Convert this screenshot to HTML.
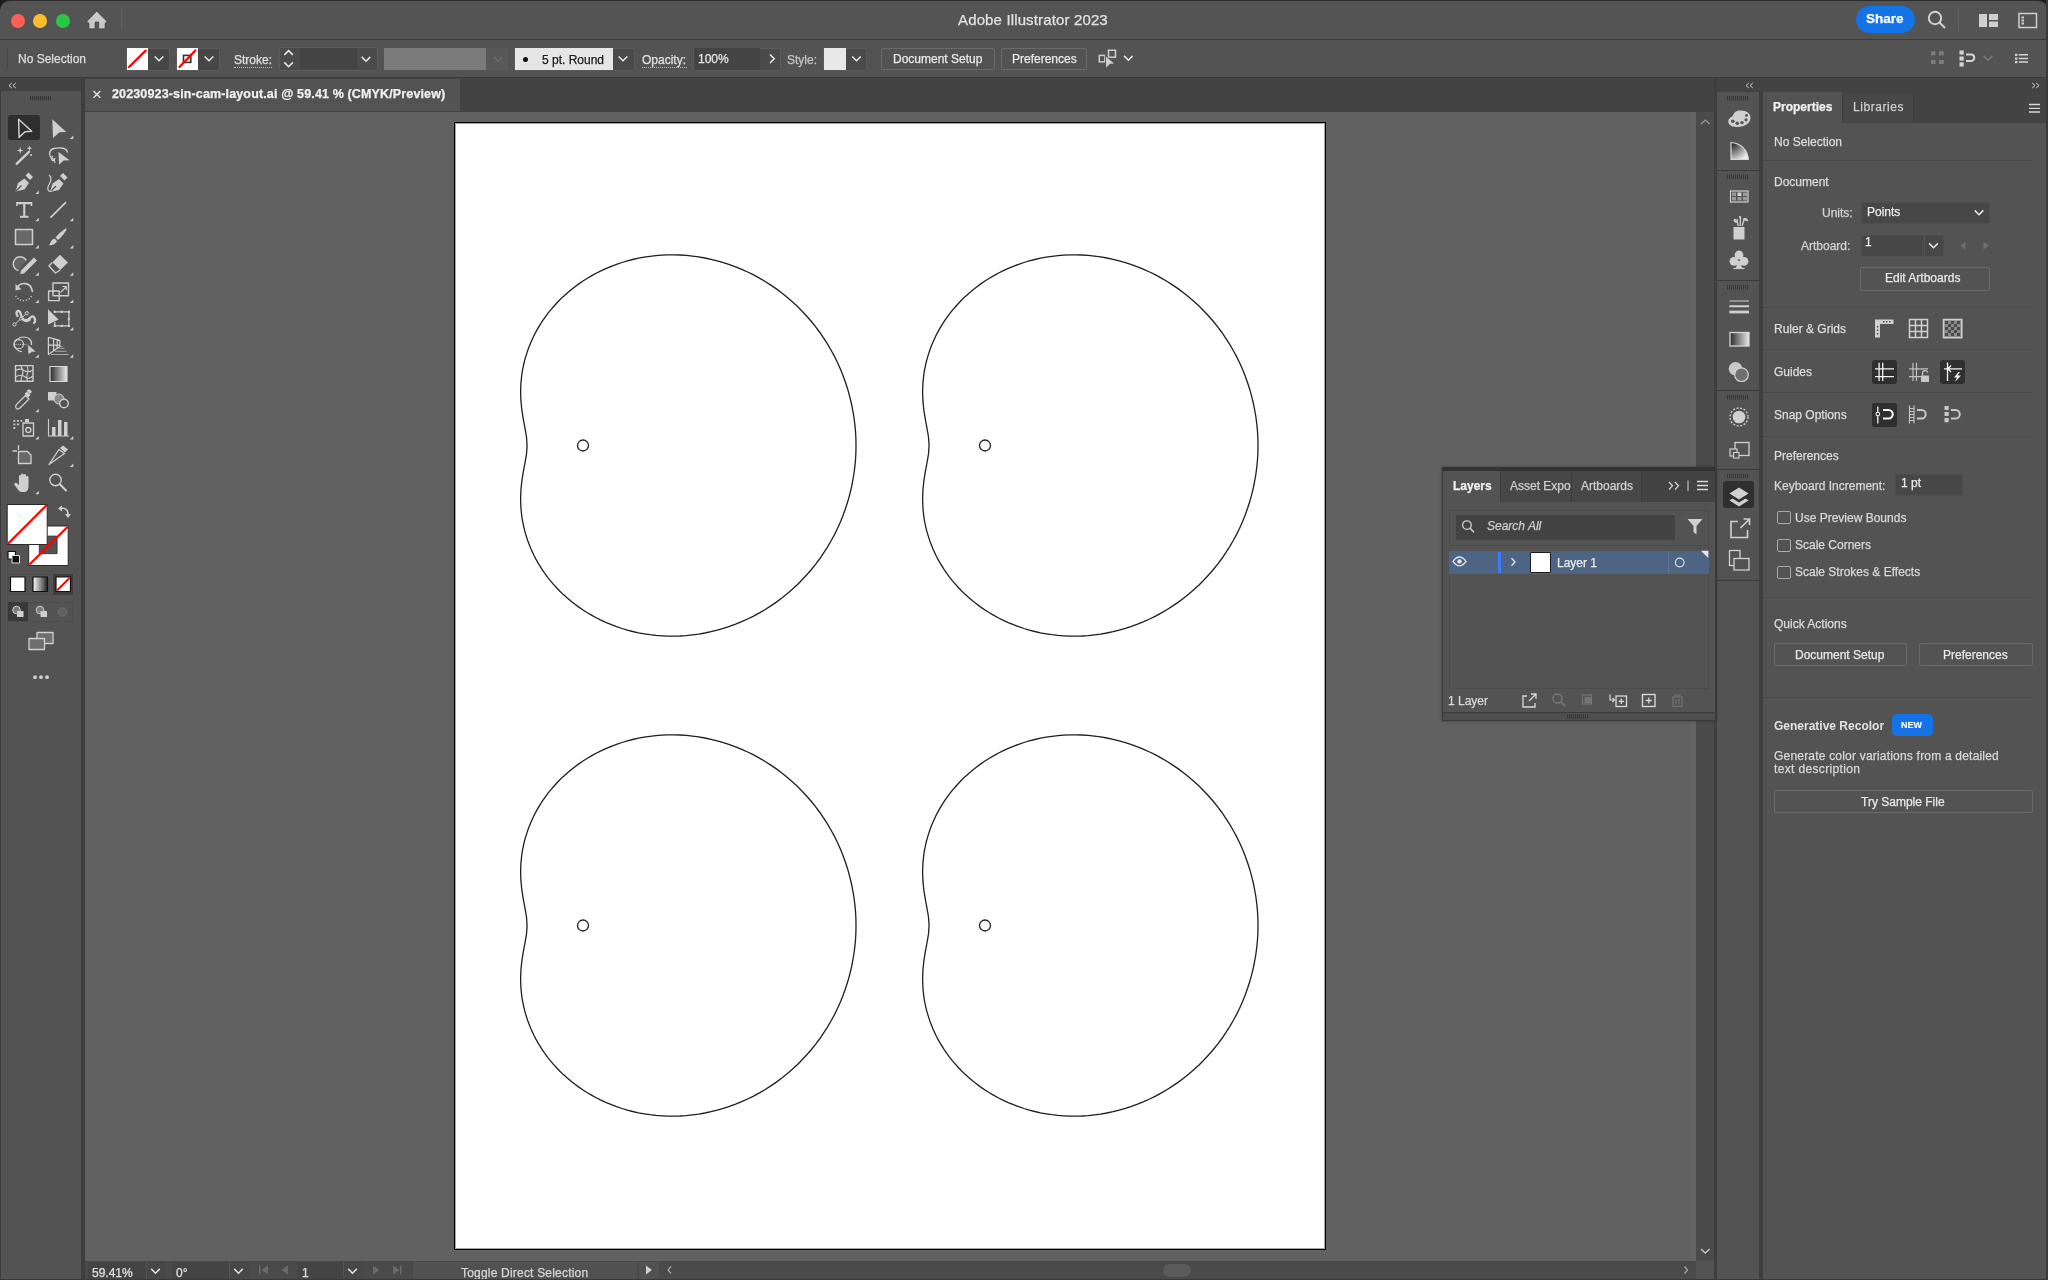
<!DOCTYPE html>
<html><head><meta charset="utf-8">
<style>
*{margin:0;padding:0;box-sizing:border-box}
html,body{width:2048px;height:1280px;overflow:hidden;background:#535353}
html{background:#1c1c1c}
body{position:relative;font-family:"Liberation Sans",sans-serif}
.a{position:absolute}
.t{position:absolute;white-space:nowrap;line-height:1;font-size:12px;color:#dcdcdc;-webkit-text-stroke-width:0.25px;will-change:transform}
.b{font-weight:bold}
svg{position:absolute;overflow:visible}
</style></head><body>
<!-- title bar -->
<div class="a" style="left:0;top:0;width:12px;height:12px;background:#1c1c1c"></div><div class="a" style="left:2036px;top:0;width:12px;height:12px;background:#1c1c1c"></div>
<div class="a" style="left:0;top:0;width:2048px;height:40px;background:#545454;border-top:1px solid #2c2c2c;border-radius:10px 10px 0 0"></div>
<div class="a" style="left:0;top:39px;width:2048px;height:1px;background:#3b3b3b"></div>
<div class="a" style="left:10.5px;top:13.8px;width:14px;height:14px;border-radius:50%;background:#fe5f57"></div>
<div class="a" style="left:33.3px;top:13.8px;width:14px;height:14px;border-radius:50%;background:#febc2e"></div>
<div class="a" style="left:56px;top:13.8px;width:14px;height:14px;border-radius:50%;background:#28c840"></div>
<div class="a" style="left:121px;top:8px;width:1px;height:22px;background:#5f5f5f"></div>
<div class="t" style="left:958px;top:11.8px;font-size:15px;letter-spacing:0.14px;color:#e2e2e2">Adobe Illustrator 2023</div>
<div class="a" style="left:1856px;top:6px;width:59px;height:27px;border-radius:14px;background:#1473e6"></div>
<div class="t b" style="left:1866px;top:11.7px;font-size:13.5px;color:#fff">Share</div>
<div class="a" style="left:1958px;top:8px;width:1px;height:23px;background:#5f5f5f"></div>
<!-- control bar -->
<div class="a" style="left:0;top:40px;width:2048px;height:38px;background:#535353"></div>
<div class="a" style="left:0;top:77px;width:2048px;height:1px;background:#3c3c3c"></div>
<div class="t" style="left:17.6px;top:52.7px;color:#dedede">No Selection</div>
<div class="a" style="left:125.5px;top:47.5px;width:44px;height:23px;border:1px solid #5b5b5b;border-radius:2px;background:#474747"></div>
<div class="a" style="left:126.6px;top:48px;width:21.5px;height:21.7px;background:#fff"></div>
<div class="a" style="left:175.5px;top:47.5px;width:44px;height:23px;border:1px solid #5b5b5b;border-radius:2px;background:#474747"></div>
<div class="a" style="left:176.5px;top:48px;width:21.8px;height:21.7px;background:#fff"></div>
<div class="t" style="left:233.5px;top:53.6px;color:#e0e0e0">Stroke:</div>
<div class="a" style="left:278.8px;top:47.3px;width:99px;height:23.4px;border:1px solid #5c5c5c;border-radius:2px;background:#4b4b4b"></div>
<div class="a" style="left:299.5px;top:48px;width:57px;height:21.2px;background:#444"></div>
<div class="a" style="left:384px;top:47.5px;width:102px;height:22.5px;background:#7b7b7b"></div>
<div class="a" style="left:486px;top:47.5px;width:22px;height:22.5px;background:#585858"></div>
<div class="a" style="left:513.5px;top:47.5px;width:121px;height:23px;border:1px solid #5b5b5b;border-radius:2px;background:#4a4a4a"></div>
<div class="a" style="left:514.5px;top:48px;width:98px;height:21.7px;background:#e6e6e6"></div>
<div class="a" style="left:522.5px;top:56.5px;width:5px;height:5px;border-radius:50%;background:#111"></div>
<div class="t" style="left:542px;top:53.6px;color:#1a1a1a">5 pt. Round</div>
<div class="t" style="left:642px;top:53.6px;color:#e0e0e0">Opacity:</div>
<div class="a" style="left:693px;top:47.5px;width:88px;height:23px;border:1px solid #5b5b5b;border-radius:2px;background:#4b4b4b"></div>
<div class="a" style="left:694px;top:48px;width:66.3px;height:21.7px;background:#444"></div>
<div class="t" style="left:698px;top:53px;color:#e6e6e6">100%</div>
<div class="a" style="left:233.5px;top:66.5px;width:38px;height:1px;border-top:1px dotted #bdbdbd"></div>
<div class="a" style="left:642px;top:66.5px;width:45px;height:1px;border-top:1px dotted #bdbdbd"></div>

<div class="t" style="left:787px;top:53.6px;color:#c4c4c4">Style:</div>
<div class="a" style="left:823px;top:47.5px;width:44px;height:23px;border:1px solid #5b5b5b;border-radius:2px;background:#4a4a4a"></div>
<div class="a" style="left:823.8px;top:48px;width:22.2px;height:21.7px;background:#e8e8e8"></div>
<div class="a" style="left:881px;top:48px;width:113.5px;height:21.5px;border:1px solid #6a6a6a;border-radius:2px"></div>
<div class="t" style="left:892.6px;top:53.3px;color:#e8e8e8">Document Setup</div>
<div class="a" style="left:1000.5px;top:48px;width:86px;height:21.5px;border:1px solid #6a6a6a;border-radius:2px"></div>
<div class="t" style="left:1012px;top:53.3px;color:#e8e8e8">Preferences</div>
<!-- left tool panel -->
<div class="a" style="left:0;top:78px;width:81px;height:1202px;background:#535353;border-left:1px solid #3c3c3c"></div>
<div class="a" style="left:0;top:78px;width:81px;height:13px;background:#434343"></div>
<div class="a" style="left:81px;top:78px;width:4px;height:1202px;background:#3f3f3f"></div>
<div class="a" style="left:8.2px;top:115px;width:31.8px;height:25px;background:#2e2e2e;border-radius:3px"></div>
<div class="a" style="left:7.6px;top:574px;width:65px;height:21px;border:1px solid #4d4d4d"></div>
<div class="a" style="left:52.5px;top:574px;width:20px;height:21px;background:#3d3d3d"></div>
<div class="a" style="left:7.6px;top:602px;width:65px;height:20px;border:1px solid #4d4d4d"></div>
<div class="a" style="left:8px;top:602.4px;width:20px;height:19px;background:#393939"></div>
<!-- tab bar -->
<div class="a" style="left:85px;top:78px;width:1629px;height:34px;background:#434343"></div>
<div class="a" style="left:85px;top:79px;width:375px;height:32px;background:#535353"></div>
<div class="t b" style="left:112px;top:87.7px;font-size:12.5px;letter-spacing:0.14px;color:#f0f0f0">20230923-sin-cam-layout.ai @ 59.41 % (CMYK/Preview)</div>
<!-- canvas -->
<div class="a" style="left:85px;top:112px;width:1611px;height:1149px;background:#616161"></div>
<div class="a" style="left:454px;top:122px;width:872px;height:1128px;background:#fff;border:1px solid #000;box-shadow:inset 0 0 0 1px rgba(0,0,0,.35)"></div>
<svg width="2048" height="1280" style="left:0;top:0">
<defs><path id="cam" d="M273.0 -0.0 L272.9 -7.1 L272.5 -14.3 L271.8 -21.4 L270.9 -28.5 L269.7 -35.5 L268.3 -42.5 L266.6 -49.4 L264.7 -56.3 L262.5 -63.0 L260.1 -69.7 L257.5 -76.3 L254.6 -82.7 L251.5 -89.1 L248.1 -95.3 L244.6 -101.3 L240.8 -107.2 L236.9 -113.0 L232.7 -118.6 L228.4 -124.0 L223.8 -129.2 L219.1 -134.3 L214.3 -139.2 L209.3 -143.8 L204.1 -148.3 L198.8 -152.5 L193.4 -156.6 L187.8 -160.4 L182.2 -164.0 L176.4 -167.4 L170.6 -170.6 L164.6 -173.5 L158.7 -176.2 L152.6 -178.7 L146.5 -180.9 L140.4 -182.9 L134.2 -184.7 L128.0 -186.2 L121.8 -187.5 L115.6 -188.6 L109.4 -189.4 L103.2 -190.1 L97.0 -190.5 L90.9 -190.6 L84.9 -190.6 L78.8 -190.3 L72.9 -189.9 L67.0 -189.2 L61.2 -188.3 L55.5 -187.3 L49.8 -186.0 L44.3 -184.6 L38.9 -183.0 L33.6 -181.2 L28.4 -179.2 L23.3 -177.1 L18.4 -174.9 L13.6 -172.5 L8.9 -169.9 L4.4 -167.3 L0.0 -164.5 L-4.2 -161.6 L-8.3 -158.6 L-12.2 -155.5 L-16.0 -152.3 L-19.6 -149.1 L-23.1 -145.7 L-26.4 -142.3 L-29.5 -138.8 L-32.5 -135.3 L-35.3 -131.8 L-38.0 -128.2 L-40.5 -124.6 L-42.8 -120.9 L-45.0 -117.3 L-47.1 -113.6 L-49.0 -110.0 L-50.7 -106.3 L-52.3 -102.7 L-53.8 -99.1 L-55.1 -95.5 L-56.3 -91.9 L-57.4 -88.4 L-58.4 -84.9 L-59.2 -81.5 L-59.9 -78.1 L-60.6 -74.8 L-61.1 -71.5 L-61.5 -68.3 L-61.8 -65.1 L-62.1 -62.1 L-62.2 -59.1 L-62.3 -56.1 L-62.4 -53.3 L-62.3 -50.5 L-62.2 -47.7 L-62.1 -45.1 L-61.9 -42.5 L-61.6 -40.0 L-61.4 -37.6 L-61.1 -35.3 L-60.8 -33.0 L-60.4 -30.8 L-60.1 -28.7 L-59.7 -26.6 L-59.4 -24.6 L-59.0 -22.7 L-58.7 -20.8 L-58.3 -18.9 L-58.0 -17.2 L-57.7 -15.5 L-57.4 -13.8 L-57.1 -12.1 L-56.8 -10.5 L-56.6 -9.0 L-56.4 -7.4 L-56.3 -5.9 L-56.2 -4.4 L-56.1 -2.9 L-56.0 -1.5 L-56.0 -0.0 L-56.0 1.5 L-56.1 2.9 L-56.2 4.4 L-56.3 5.9 L-56.4 7.4 L-56.6 9.0 L-56.8 10.5 L-57.1 12.1 L-57.4 13.8 L-57.7 15.5 L-58.0 17.2 L-58.3 18.9 L-58.7 20.8 L-59.0 22.7 L-59.4 24.6 L-59.7 26.6 L-60.1 28.7 L-60.4 30.8 L-60.8 33.0 L-61.1 35.3 L-61.4 37.6 L-61.6 40.0 L-61.9 42.5 L-62.1 45.1 L-62.2 47.7 L-62.3 50.5 L-62.4 53.3 L-62.3 56.1 L-62.2 59.1 L-62.1 62.1 L-61.8 65.1 L-61.5 68.3 L-61.1 71.5 L-60.6 74.8 L-59.9 78.1 L-59.2 81.5 L-58.4 84.9 L-57.4 88.4 L-56.3 91.9 L-55.1 95.5 L-53.8 99.1 L-52.3 102.7 L-50.7 106.3 L-49.0 110.0 L-47.1 113.6 L-45.0 117.3 L-42.8 120.9 L-40.5 124.6 L-38.0 128.2 L-35.3 131.8 L-32.5 135.3 L-29.5 138.8 L-26.4 142.3 L-23.1 145.7 L-19.6 149.1 L-16.0 152.3 L-12.2 155.5 L-8.3 158.6 L-4.2 161.6 L-0.0 164.5 L4.4 167.3 L8.9 169.9 L13.6 172.5 L18.4 174.9 L23.3 177.1 L28.4 179.2 L33.6 181.2 L38.9 183.0 L44.3 184.6 L49.8 186.0 L55.5 187.3 L61.2 188.3 L67.0 189.2 L72.9 189.9 L78.8 190.3 L84.9 190.6 L90.9 190.6 L97.0 190.5 L103.2 190.1 L109.4 189.4 L115.6 188.6 L121.8 187.5 L128.0 186.2 L134.2 184.7 L140.4 182.9 L146.5 180.9 L152.6 178.7 L158.7 176.2 L164.6 173.5 L170.6 170.6 L176.4 167.4 L182.2 164.0 L187.8 160.4 L193.4 156.6 L198.8 152.5 L204.1 148.3 L209.3 143.8 L214.3 139.2 L219.1 134.3 L223.8 129.2 L228.4 124.0 L232.7 118.6 L236.9 113.0 L240.8 107.2 L244.6 101.3 L248.1 95.3 L251.5 89.1 L254.6 82.7 L257.5 76.3 L260.1 69.7 L262.5 63.0 L264.7 56.3 L266.6 49.4 L268.3 42.5 L269.7 35.5 L270.9 28.5 L271.8 21.4 L272.5 14.3 L272.9 7.1Z" fill="none" stroke="#1e1e1e" stroke-width="1.3"/></defs>
<use href="#cam" x="583" y="445.5"/><use href="#cam" x="985" y="445.5"/>
<use href="#cam" x="583" y="925.5"/><use href="#cam" x="985" y="925.5"/>
<g fill="none" stroke="#1e1e1e" stroke-width="1.3">
<circle cx="583" cy="445.5" r="5.5"/><circle cx="985" cy="445.5" r="5.5"/>
<circle cx="583" cy="925.5" r="5.5"/><circle cx="985" cy="925.5" r="5.5"/>
</g></svg>
<!-- vertical scrollbar -->
<div class="a" style="left:1690px;top:112px;width:6px;height:1149px;background:#636363"></div>
<div class="a" style="left:1696px;top:112px;width:18px;height:1149px;background:#4b4b4b"></div>
<!-- status bar -->
<div class="a" style="left:85px;top:1261px;width:1611px;height:19px;background:#4a4a4a"></div>

<!-- dock -->
<div class="a" style="left:1714px;top:78px;width:3px;height:1202px;background:#3f3f3f"></div>
<div class="a" style="left:1717px;top:78px;width:42px;height:1202px;background:#535353"></div>
<div class="a" style="left:1717px;top:78px;width:331px;height:14px;background:#434343"></div>
<div class="a" style="left:1759px;top:92px;width:4px;height:1188px;background:#3f3f3f"></div>
<!-- properties -->
<div class="a" style="left:1763px;top:92px;width:283px;height:1188px;background:#535353"></div>
<div class="a" style="left:1842px;top:92px;width:204px;height:30.5px;background:#434343"></div>
<div class="a" style="left:1842px;top:93px;width:72px;height:29px;background:#474747;border-left:1px solid #3c3c3c;border-right:1px solid #3c3c3c"></div>
<div class="t b" style="left:1773px;top:100.7px;color:#f0f0f0">Properties</div>
<div class="t" style="left:1852.5px;top:100.7px;letter-spacing:0.55px;color:#cfcfcf">Libraries</div>
<div class="t" style="left:1774px;top:136.2px;color:#dcdcdc">No Selection</div>
<div class="a" style="left:1763px;top:160px;width:270px;height:1px;background:#4a4a4a"></div>
<div class="t" style="left:1774px;top:175.7px;color:#dcdcdc">Document</div>
<div class="t" style="left:1822px;top:206.6px;color:#d4d4d4">Units:</div>
<div class="a" style="left:1860.5px;top:201.5px;width:129.5px;height:22.5px;background:#474747;border:1px solid #4e4e4e;border-radius:2px"></div>
<div class="t" style="left:1867px;top:206.1px;color:#eaeaea">Points</div>
<div class="t" style="left:1801px;top:239.6px;color:#d4d4d4">Artboard:</div>
<div class="a" style="left:1860.5px;top:235px;width:83.5px;height:21.5px;background:#474747;border:1px solid #4e4e4e;border-radius:2px"></div>
<div class="a" style="left:1923.5px;top:235.5px;width:1px;height:20.5px;background:#555"></div>
<div class="t" style="left:1865px;top:236.1px;color:#eaeaea">1</div>
<div class="a" style="left:1860px;top:267px;width:130px;height:23.5px;border:1px solid #6a6a6a;border-radius:2px"></div>
<div class="t" style="left:1884.5px;top:272.2px;color:#e8e8e8">Edit Artboards</div>
<div class="a" style="left:1763px;top:306.5px;width:270px;height:1px;background:#4a4a4a"></div>
<div class="t" style="left:1774px;top:322.7px;color:#dcdcdc">Ruler &amp; Grids</div>
<div class="a" style="left:1763px;top:349px;width:270px;height:1px;background:#4a4a4a"></div>
<div class="t" style="left:1774px;top:365.7px;color:#dcdcdc">Guides</div>
<div class="a" style="left:1872px;top:359.5px;width:25px;height:24px;background:#2f2f2f;border-radius:3px"></div>
<div class="a" style="left:1940px;top:359.5px;width:25px;height:24px;background:#2f2f2f;border-radius:3px"></div>
<div class="a" style="left:1763px;top:392px;width:270px;height:1px;background:#4a4a4a"></div>
<div class="t" style="left:1774px;top:408.7px;color:#dcdcdc">Snap Options</div>
<div class="a" style="left:1872px;top:402.5px;width:25px;height:24px;background:#2f2f2f;border-radius:3px"></div>
<div class="a" style="left:1763px;top:435.5px;width:270px;height:1px;background:#4a4a4a"></div>
<div class="t" style="left:1774px;top:450.0px;color:#dcdcdc">Preferences</div>
<div class="t" style="left:1774px;top:480.0px;color:#d8d8d8">Keyboard Increment:</div>
<div class="a" style="left:1895px;top:473.5px;width:67.5px;height:22px;background:#474747;border:1px solid #4e4e4e;border-radius:2px"></div>
<div class="t" style="left:1901px;top:477.0px;color:#eaeaea">1 pt</div>
<div class="a" style="left:1777px;top:511px;width:13.5px;height:13px;border:1px solid #a8a8a8;border-radius:2px"></div>
<div class="t" style="left:1794.5px;top:511.5px;color:#d8d8d8">Use Preview Bounds</div>
<div class="a" style="left:1777px;top:538.5px;width:13.5px;height:13px;border:1px solid #a8a8a8;border-radius:2px"></div>
<div class="t" style="left:1794.5px;top:539.0px;color:#d8d8d8">Scale Corners</div>
<div class="a" style="left:1777px;top:565.5px;width:13.5px;height:13px;border:1px solid #a8a8a8;border-radius:2px"></div>
<div class="t" style="left:1794.5px;top:566.0px;color:#d8d8d8">Scale Strokes &amp; Effects</div>
<div class="a" style="left:1763px;top:597px;width:270px;height:1px;background:#4a4a4a"></div>
<div class="t" style="left:1774px;top:618.0px;color:#dcdcdc">Quick Actions</div>
<div class="a" style="left:1774px;top:643px;width:133px;height:23px;border:1px solid #6a6a6a;border-radius:2px"></div>
<div class="t" style="left:1795px;top:649.0px;color:#e8e8e8">Document Setup</div>
<div class="a" style="left:1918.5px;top:643px;width:114px;height:23px;border:1px solid #6a6a6a;border-radius:2px"></div>
<div class="t" style="left:1943px;top:649.0px;color:#e8e8e8">Preferences</div>
<div class="a" style="left:1763px;top:697px;width:270px;height:1px;background:#4a4a4a"></div>
<div class="t b" style="left:1774px;top:720.0px;color:#e2e2e2;-webkit-text-stroke-width:0">Generative Recolor</div>
<div class="a" style="left:1891.5px;top:714px;width:41.5px;height:22px;background:#1473e6;border-radius:5px"></div>
<div class="t b" style="left:1901.3px;top:721.2px;font-size:9px;color:#fff;-webkit-text-stroke-width:0.1px">NEW</div>
<div class="t" style="left:1774px;top:749.5px;letter-spacing:0.2px;color:#d8d8d8">Generate color variations from a detailed</div>
<div class="t" style="left:1774px;top:763.0px;letter-spacing:0.35px;color:#d8d8d8">text description</div>
<div class="a" style="left:1774px;top:789.5px;width:258.5px;height:23.5px;border:1px solid #6a6a6a;border-radius:2px"></div>
<div class="t" style="left:1861px;top:796.0px;color:#e8e8e8">Try Sample File</div>
<div class="a" style="left:2046px;top:0;width:2px;height:1280px;background:#3a3a3a"></div>
<!-- layers panel -->
<div class="a" style="left:1441.5px;top:467px;width:274px;height:254px;background:#535353;border:1px solid #3a3a3a;box-shadow:0 0 3px rgba(0,0,0,.35)"></div>
<div class="a" style="left:1442.5px;top:468px;width:272px;height:34px;background:#434343"></div>
<div class="a" style="left:1442.5px;top:467px;width:272px;height:4px;background:#333"></div>
<div class="a" style="left:1442.5px;top:471px;width:57.5px;height:31px;background:#535353"></div>
<div class="a" style="left:1500px;top:471px;width:71px;height:30.5px;background:#474747;border-left:1px solid #3c3c3c"></div>
<div class="a" style="left:1571px;top:471px;width:71px;height:30.5px;background:#474747;border-left:1px solid #3c3c3c;border-right:1px solid #3c3c3c"></div>
<div class="t b" style="left:1453px;top:480px;color:#f0f0f0">Layers</div>
<div class="a" style="left:1500px;top:469px;width:71px;height:33px;overflow:hidden"><div class="t" style="left:10px;top:11px;color:#d0d0d0">Asset Export</div></div>
<div class="t" style="left:1581px;top:480px;color:#d0d0d0">Artboards</div>
<div class="a" style="left:1448.5px;top:509.5px;width:260px;height:36px;border:1px solid #4c4c4c;background:#535353"></div>
<div class="a" style="left:1455.5px;top:514.5px;width:219.5px;height:25px;background:#434343;border-radius:2px"></div>
<div class="t" style="left:1487px;top:520px;color:#cfcfcf;font-style:italic">Search All</div>
<div class="a" style="left:1448.5px;top:545px;width:260.5px;height:144px;border:1px solid #4c4c4c;border-top:none"></div>
<div class="a" style="left:1448.5px;top:550.5px;width:260px;height:23.5px;background:#4d6582"></div>
<div class="a" style="left:1497.5px;top:552px;width:3.5px;height:21px;background:#3d7bf7"></div>
<div class="a" style="left:1667.5px;top:550.5px;width:1px;height:23.5px;background:#5a7290"></div>
<div class="a" style="left:1530px;top:552px;width:21px;height:21px;background:#fff;border:1.5px solid #1a1a1a;border-radius:1px"></div>
<div class="t" style="left:1557px;top:557px;color:#eaeaea">Layer 1</div>
<div class="t" style="left:1448px;top:695px;color:#d8d8d8">1 Layer</div>
<div class="a" style="left:1442.5px;top:712px;width:272px;height:8px;background:#4e4e4e;border-top:1px solid #3a3a3a"></div>
<!-- dock icons bg -->
<div class="a" style="left:1717px;top:170px;width:42px;height:1px;background:#3a3a3a"></div>
<div class="a" style="left:1717px;top:280px;width:42px;height:1px;background:#3a3a3a"></div>
<div class="a" style="left:1717px;top:390px;width:42px;height:1px;background:#3a3a3a"></div>
<div class="a" style="left:1717px;top:469px;width:42px;height:1px;background:#3a3a3a"></div>
<div class="a" style="left:1717px;top:579.5px;width:42px;height:1.5px;background:#3a3a3a"></div>
<div class="a" style="left:1723px;top:481px;width:30.5px;height:26.5px;background:#2f2f2f;border-radius:3px"></div>
<!-- status widgets -->
<div class="a" style="left:88px;top:1262px;width:58px;height:18px;background:#444"></div>
<div class="a" style="left:146px;top:1262px;width:19px;height:18px;background:#474747;border-left:1px solid #555"></div>
<div class="a" style="left:172px;top:1262px;width:56.5px;height:18px;background:#444"></div>
<div class="a" style="left:228.5px;top:1262px;width:20.5px;height:18px;background:#474747;border-left:1px solid #555"></div>
<div class="a" style="left:297px;top:1262px;width:46px;height:18px;background:#444"></div>
<div class="a" style="left:343px;top:1262px;width:21px;height:18px;background:#474747;border-left:1px solid #555"></div>
<div class="a" style="left:668px;top:1261px;width:1028px;height:19px;background:#4a4a4a"></div>
<div class="a" style="left:411.5px;top:1262px;width:225.5px;height:18px;background:#515151;border-left:1px solid #474747"></div>
<div class="a" style="left:637.5px;top:1262px;width:21px;height:18px;background:#515151;border-left:1px solid #474747"></div>
<div class="t" style="left:461px;top:1266.5px;letter-spacing:0.2px;color:#d6d6d6">Toggle Direct Selection</div>
<div class="a" style="left:1163px;top:1264px;width:28px;height:13px;border-radius:7px;background:#5a5a5a"></div>
<div class="a" style="left:1696px;top:1261px;width:18px;height:19px;background:#535353"></div>
<div class="t" style="left:92px;top:1266.5px;color:#e0e0e0">59.41%</div>
<div class="t" style="left:176px;top:1266.5px;color:#e0e0e0">0°</div>
<div class="t" style="left:302px;top:1266.5px;color:#e0e0e0">1</div>
<div class="a" style="left:0;top:1279px;width:2048px;height:1px;background:#393939"></div>
<svg width="2048" height="1280" style="left:0;top:0" id="ov">
<defs><polyline id="chv" points="-4.3,-2.1 0,2.2 4.3,-2.1" fill="none" stroke-width="1.5"/></defs>
<path d="M96.75 11.25 L107 21.5 L105 23.2 L105 28.75 L98.75 28.75 L98.75 22 L95 22 L95 28.75 L89 28.75 L89 23.2 L86.75 21.5 Z" fill="#c9c9c9" stroke="#3e3e3e" stroke-width="0.6"/>
<g fill="none" stroke="#d2d2d2" stroke-width="2"><circle cx="1935" cy="18" r="6.2"/><path d="M1939.5 22.5 L1945 28"/></g>
<g fill="#cfcfcf"><rect x="1979" y="14" width="8" height="13"/><rect x="1989" y="14" width="9" height="6"/><rect x="1989" y="21.5" width="9" height="5.5"/></g>
<g fill="none" stroke="#cfcfcf" stroke-width="1.5"><rect x="2019" y="13.5" width="17.5" height="14"/></g>
<g fill="#cfcfcf"><rect x="2021.5" y="16.5" width="2.5" height="2"/><rect x="2021.5" y="19.5" width="2.5" height="2"/><rect x="2021.5" y="22.5" width="2.5" height="2"/></g>
<g stroke="#3a3a3a" stroke-width="1.2" stroke-dasharray="1 1.2"><path d="M7.5 48 V70"/></g>
<g stroke="#ff0000" stroke-width="2.2" stroke-linecap="round"><path d="M129 67 L145.7 50.6"/></g>
<rect x="183.5" y="55.4" width="7.3" height="7" fill="none" stroke="#333" stroke-width="1.6"/>
<g stroke="#ff0000" stroke-width="2.2" stroke-linecap="round"><path d="M179.5 67 L195.3 50.5"/></g>
<use href="#chv" x="159" y="58.6" stroke="#e8e8e8"/><use href="#chv" x="209" y="58.6" stroke="#e8e8e8"/>
<use href="#chv" x="288.6" y="64.5" stroke="#e8e8e8"/><use href="#chv" x="288.6" y="52.8" transform="rotate(180 288.6 52.8)" stroke="#e8e8e8"/>
<use href="#chv" x="366" y="59" stroke="#e8e8e8"/>
<use href="#chv" x="498" y="59" stroke="#6a6a6a"/>
<use href="#chv" x="623" y="58.6" stroke="#e8e8e8"/>
<polyline points="770,54.5 774.2,58.8 770,63" fill="none" stroke="#e8e8e8" stroke-width="1.5"/>
<use href="#chv" x="856.5" y="58.6" stroke="#e8e8e8"/>
<g fill="none" stroke="#cdcdcd" stroke-width="1.5"><rect x="1099.3" y="55.4" width="5.5" height="6.5"/><rect x="1108.5" y="50.2" width="7" height="7"/></g>
<path d="M1105.3 55.5 L1115 63.8 L1110 64.2 L1105.8 68.5 Z" fill="#d0d0d0" stroke="#474747" stroke-width="0.8"/>
<use href="#chv" x="1128.4" y="58" stroke="#e8e8e8"/>
<g fill="#7d7d7d"><rect x="1931" y="51.3" width="4.5" height="4.1"/><rect x="1939" y="51.3" width="4.8" height="4.1"/><rect x="1931" y="60" width="4.5" height="4"/><rect x="1939" y="60" width="4.8" height="4"/></g>
<g fill="#d4d4d4"><rect x="1959.5" y="50.5" width="4.2" height="4.1"/><rect x="1959.5" y="56.5" width="4.2" height="4.1"/><rect x="1959.5" y="62.3" width="4.2" height="4.2"/></g>
<path d="M1966 54.5 H1971.5 A3.3 3.3 0 0 1 1971.5 61 H1966" fill="none" stroke="#d4d4d4" stroke-width="2"/>
<use href="#chv" x="1988" y="58" stroke="#7a7a7a"/>
<g fill="#d4d4d4"><rect x="2015" y="53.8" width="2.4" height="2.2"/><rect x="2015" y="57.5" width="2.4" height="2.2"/><rect x="2015" y="61" width="2.4" height="2.2"/></g>
<g stroke="#d4d4d4" stroke-width="1.4"><path d="M2018.8 54.8 H2028 M2018.8 58.5 H2028 M2018.8 62 H2028"/></g>
<g id="tools" fill="none" stroke="#cfcfcf" stroke-width="1.4" stroke-linejoin="round">
<path d="M7.6 49 V51 M29 49 V51" stroke="none"/>
<g stroke="#3a3a3a" stroke-width="1.2" stroke-dasharray="1 1.2"><path d="M30 98 H52" transform="rotate(90 41 98) rotate(-90 41 98)"/></g>
<!-- row1 -->
<path d="M18.6 119.3 L31.7 131.3 L25 131.8 L19.1 137.4 Z" fill="#2e2e2e" stroke-width="1.5"/>
<path d="M52.3 119.3 L66.2 131.9 L59.5 132.2 L53 137.9 Z" fill="#cfcfcf" stroke="none"/>
<!-- row2 magic wand -->
<path d="M16.6 163.8 L29 151.8" stroke-width="2.3" stroke-linecap="round"/>
<path d="M20.2 147 L21 149.7 L23.7 150.5 L21 151.3 L20.2 154 L19.4 151.3 L16.7 150.5 L19.4 149.7 Z M29.5 145.5 L30.2 147.6 L32.3 148.3 L30.2 149 L29.5 151.1 L28.8 149 L26.7 148.3 L28.8 147.6 Z" fill="#cfcfcf" stroke="none"/>
<circle cx="31.2" cy="154.9" r="1" fill="#cfcfcf" stroke="none"/>
<!-- lasso -->
<path d="M55 160 C48 158 48 150 54 148.5 C60 147 67 148 67.5 152.5" stroke-width="1.3"/>
<path d="M53 156 C50 158 52 162 54 160 C56 158 53 157 55 163" stroke-width="1.2"/>
<path d="M58.5 152 L69.5 160.3 L63.5 160.6 L59 164.7 Z" fill="#cfcfcf" stroke="none"/>
<!-- row3 pen -->
<path d="M15.5 191.5 L18 183 L24.5 178.5 L29 183 L24.5 189.5 Z" fill="#cfcfcf" stroke="none"/>
<path d="M25.5 175.5 L28.5 172.5 L33 177 L30 180 Z" fill="#cfcfcf" stroke="none"/>
<path d="M16 191 L21.5 185.5" stroke="#535353" stroke-width="1.2"/>
<path d="M50 192 L52.5 183.5 L59 179 L63.5 183.5 L59 190 Z" fill="#cfcfcf" stroke="none"/>
<path d="M60 176 L63 173 L67.5 177.5 L64.5 180.5 Z" fill="#cfcfcf" stroke="none"/>
<path d="M50.5 191.5 L56 186" stroke="#535353" stroke-width="1.2"/>
<path d="M49 175 C53 178 50 183 48 187 C47 190 49 192 52 191" stroke-width="1.2"/>
<!-- row4 type -->
<path d="M16.2 202 H32.3 V206 H30.8 V204.2 H25.3 V215.8 H28.5 V217.8 H20 V215.8 H23.2 V204.2 H17.7 V206 H16.2 Z" fill="#cfcfcf" stroke="none"/>
<path d="M50.5 217.6 L66 202.1" stroke-width="1.6"/>
<!-- row5 rect brush -->
<rect x="15.5" y="229.5" width="17" height="15" fill="#686868" stroke-width="1.5"/>
<path d="M66.5 228.5 C67.5 229.5 61 238 58 240 L55.5 237.5 C57.5 234.5 65.5 227.5 66.5 228.5 Z" fill="#cfcfcf" stroke="none"/>
<path d="M54.5 238.5 L57 241 C56 244 52 245.5 49 245.3 C50.5 243 51 239.5 54.5 238.5 Z" fill="#cfcfcf" stroke="none"/>
<!-- row6 shaper eraser -->
<path d="M18.5 270.6 A7 7 0 1 1 26.3 260.3" stroke-width="1.4" fill="#666"/>
<path d="M34 257.5 L37 260.5 L24 273.5 L20.3 274 L21 270.5 Z" fill="#cfcfcf" stroke="none"/>
<path d="M59.9 254.8 L67.9 262.5 L60.2 270 L52.2 262.5 Z" fill="#cfcfcf" stroke="none"/>
<path d="M52.2 262.5 L49 266 L55.5 273 L60.2 270" fill="#535353" stroke-width="1.3"/>
<!-- row7 rotate scale -->
<path d="M17.5 287 C21 282 31 281.5 32.5 292" stroke-width="1.7"/>
<path d="M15.5 284 L21.5 289.2 L15.5 290.5 Z" fill="#cfcfcf" stroke="none"/>
<path d="M31.5 296 C29.5 300 25 301 22 300.5 C19 300 16.5 298 15.5 295.5" stroke-width="1.3" stroke-dasharray="1.2 1.8"/>
<rect x="53" y="283" width="15.5" height="12.8" stroke-width="1.4"/>
<rect x="48.6" y="291" width="10.6" height="9.6" fill="none" stroke-width="1.4"/>
<path d="M60.5 292.5 L66 287 M62.5 286.5 H66.3 V290.3" stroke-width="1.1"/>
<!-- row8 puppet free transform -->
<path d="M17.5 316 C15 312 18 309.5 20 312 C21 314 21 316 22.5 318.5 C24.5 321 28 320.5 30 318 C31.5 316 33.5 315.5 34.5 318 C35.5 320 35 322 34 323" stroke-width="2.3" stroke-linecap="round"/>
<path d="M20 317 C22 322 27 324 31 320 L30 318.5 C27 321 24 320 22 316 Z" fill="#cfcfcf" stroke="none"/>
<path d="M14.5 324.5 L26.5 313.5" stroke-width="1" stroke="#cfcfcf"/>
<circle cx="14.5" cy="324.5" r="1.6" fill="#535353" stroke-width="1"/><circle cx="26.8" cy="313.2" r="1.6" fill="#535353" stroke-width="1"/><circle cx="20.8" cy="318.8" r="1.3" fill="#535353" stroke-width="1"/>
<path d="M48 309.3 L58.6 319.5 L48 324.6 Z" fill="#cfcfcf" stroke="none"/>
<path d="M54.8 311.8 H68.9 V325.9 H54.8 V322" stroke-width="1.3"/>
<g fill="#cfcfcf" stroke="none"><circle cx="54.8" cy="311.8" r="1.2"/><circle cx="61.8" cy="311.8" r="1.2"/><circle cx="68.9" cy="311.8" r="1.2"/><circle cx="68.9" cy="318.8" r="1.2"/><circle cx="68.9" cy="325.9" r="1.2"/><circle cx="61.8" cy="325.9" r="1.2"/><circle cx="54.8" cy="325.9" r="1.2"/></g>
<!-- row9 shape builder perspective -->
<circle cx="18.9" cy="344.2" r="4.6" stroke-width="1.1"/>
<path d="M16 348.5 C12.5 346 13.5 340 18 339 C20 336.5 27 336 30 339.5 C31.5 341 31.8 343 31.3 345 M22 351.5 C19.5 351.8 17.5 350.5 16 348.5" stroke-width="1.2"/>
<path d="M15.5 344.4 H27" stroke-width="1" stroke-dasharray="1.1 1.1"/>
<path d="M27.7 344.2 L36.2 351.8 L31.5 352.2 L28.1 354.8 Z" fill="#cfcfcf" stroke="#535353" stroke-width="0.6"/>
<path d="M48.4 337.3 L59.8 340.3 V346.4 L48.4 354.5 Z M53.6 338.7 V350.8 M57.2 339.6 V348.2 M48.4 345.1 H59.8" stroke-width="1.2"/><path d="M59.8 346.3 H62.5 M58.5 348.3 H64.5 M55 351.3 H66.5 M51 354.5 H68.5" stroke="#a8a8a8" stroke-width="1"/>
<!-- row10 mesh gradient -->
<rect x="15.5" y="365.6" width="17.5" height="15.6" stroke-width="1.4"/>
<path d="M15.5 370.5 C19 368.5 22 369 24 370.5 C27 372.5 30 372 33 370 M15.5 377 C19 374.5 23 375 26 377.5 C28.5 379 31 378 33 376 M20.5 365.6 C23 369 23.5 373 22 376 C21 378 21 380 21.5 381.2 M27 365.6 C28.5 369 28 372 27 375 C26.5 377.5 27 380 27.5 381.2" stroke-width="1.1"/>
<defs><linearGradient id="gr1" x1="0" x2="1"><stop offset="0" stop-color="#2a2a2a"/><stop offset="1" stop-color="#e8e8e8"/></linearGradient></defs>
<rect x="50" y="366.5" width="17" height="15" fill="url(#gr1)" stroke="#d8d8d8" stroke-width="1.2"/>
<!-- row11 eyedropper blend -->
<path d="M16.5 408.5 C15 407 15.5 405.5 17 404 L25.5 395.5 L29 399 L20.5 407.5 C19 409 17.5 409.5 16.5 408.5 Z" stroke-width="1.2"/>
<path d="M24.5 394 L27 391.5 L30.5 395 L28 397.5 Z M28 390 C29.5 388.5 32.5 391 31.5 392.5 L30 394 L26.5 390.5 Z" fill="#cfcfcf" stroke="none"/>
<rect x="48" y="392" width="8.5" height="8.5" fill="#cfcfcf" stroke="none"/>
<circle cx="59" cy="399" r="5" fill="#8a8a8a" stroke="#cfcfcf" stroke-width="1"/>
<circle cx="64" cy="403.5" r="4.3" fill="#535353" stroke-width="1.4"/>
<!-- row12 symbol sprayer graph -->
<g fill="#cfcfcf" stroke="none"><rect x="13.5" y="420" width="1.8" height="1.8"/><rect x="17" y="420" width="1.8" height="1.8"/><rect x="20.5" y="420" width="1.8" height="1.8"/><rect x="13.5" y="423.5" width="1.8" height="1.8"/><rect x="17" y="423.5" width="1.8" height="1.8"/><rect x="13.5" y="427" width="1.8" height="1.8"/><rect x="25" y="419" width="4" height="3"/></g>
<rect x="23" y="423" width="10.5" height="13" stroke-width="1.3"/><circle cx="28.3" cy="430" r="2.5" stroke-width="1.3"/>
<path d="M48.5 419 V436 H69" stroke-width="1.1"/>
<g fill="#cfcfcf" stroke="none"><rect x="52" y="427" width="3.5" height="9"/><rect x="58" y="420" width="3.5" height="16"/><rect x="64" y="422" width="3.5" height="14"/></g>
<!-- row13 artboard knife -->
<path d="M12.5 451 H17 M18.5 445 V450" stroke-width="1.3"/>
<path d="M18.5 451.5 H27.5 L31 455 V463.5 H18.5 Z" fill="#686868" stroke-width="1.3"/>
<path d="M49 464.5 L59 449.5 L64.5 453.5 Z" fill="#535353" stroke-width="1.3"/>
<path d="M60 448 L63 445.5 L68 449.5 L65 452.5 Z" fill="#cfcfcf" stroke="none"/>
<!-- row14 hand zoom -->
<path d="M19 491 C15.5 486 13 484 15 483 C16.5 482 18 484 19 485.5 V476 C19 474.5 21 474.5 21 476 V482 V474.5 C21 473 23.5 473 23.5 474.5 V482 V475 C23.5 473.5 26 473.5 26 475 V482 V477 C26 475.5 28.5 475.5 28.5 477 V486 C28.5 489.5 27 492 24.5 492 H21 Z" fill="#cfcfcf" stroke="none"/>
<circle cx="55.5" cy="480" r="5.7" stroke-width="1.4"/><path d="M59.8 484.3 L66 490.5" stroke-width="2" stroke-linecap="round"/>
<!-- corner triangles -->
<g fill="#cfcfcf" stroke="none">
<path d="M73.3 135.5 V139 H69.8 Z"/>
<path d="M38.8 190.5 V194 H35.3 Z"/>
<path d="M38.8 217.8 V221.3 H35.3 Z M73.3 217.8 V221.3 H69.8 Z"/>
<path d="M38.8 245 V248.5 H35.3 Z M73.3 245 V248.5 H69.8 Z"/>
<path d="M38.8 272.3 V275.8 H35.3 Z M73.3 272.3 V275.8 H69.8 Z"/>
<path d="M38.8 299.6 V303.1 H35.3 Z M73.3 299.6 V303.1 H69.8 Z"/>
<path d="M38.8 326.9 V330.4 H35.3 Z M73.3 326.9 V330.4 H69.8 Z"/>
<path d="M38.8 354.2 V357.7 H35.3 Z M73.3 354.2 V357.7 H69.8 Z"/>
<path d="M38.8 408.8 V412.3 H35.3 Z"/>
<path d="M38.8 436.1 V439.6 H35.3 Z M73.3 436.1 V439.6 H69.8 Z"/>
<path d="M73.3 463.4 V466.9 H69.8 Z"/>
<path d="M38.8 490.7 V494.2 H35.3 Z"/>
</g>
<!-- fill stroke -->
<rect x="28.7" y="526" width="39.5" height="39.5" fill="#fff" stroke="#2a2a2a" stroke-width="1"/>
<rect x="39.3" y="536.1" width="17.8" height="17.6" fill="#535353" stroke="#2a2a2a" stroke-width="0.8"/>
<path d="M29.5 564.5 L67.5 527" stroke="#ff0000" stroke-width="2.2"/>
<rect x="7.2" y="504.5" width="40" height="40" fill="#fff" stroke="#2a2a2a" stroke-width="1"/>
<path d="M8 543.8 L46.5 505.2" stroke="#ff0000" stroke-width="2.2"/>
<path d="M60 509 C64 507 68 509 68 514" stroke-width="1.5"/>
<path d="M58 508.5 L62 505.5 V511.5 Z M65 514 H71 L68 518 Z" fill="#cfcfcf" stroke="none"/>
<rect x="8" y="551.5" width="7.5" height="7.5" fill="#fff" stroke="#111" stroke-width="1.2"/>
<rect x="12" y="555.5" width="7.5" height="7.5" fill="#111" stroke="#ddd" stroke-width="1"/>
<rect x="10.5" y="577" width="14.5" height="14.5" fill="#fff" stroke="#111" stroke-width="1.2"/>
<defs><linearGradient id="gr2" x1="0" x2="1"><stop offset="0" stop-color="#fff"/><stop offset="1" stop-color="#222"/></linearGradient></defs>
<rect x="33" y="577" width="14.5" height="14.5" fill="url(#gr2)" stroke="#111" stroke-width="1.2"/>
<rect x="56" y="577" width="14.5" height="14.5" fill="#fff" stroke="#111" stroke-width="1.2"/>
<path d="M57 590.5 L69.5 578" stroke="#ff0000" stroke-width="2"/>
<circle cx="16.5" cy="610" r="3.8" fill="#7a7a7a" stroke="#cfcfcf" stroke-width="1"/><rect x="17" y="611" width="6.5" height="6" fill="#cfcfcf" stroke="none"/>
<circle cx="40" cy="610" r="3.8" fill="#7a7a7a" stroke="#cfcfcf" stroke-width="1"/><rect x="40.5" y="611" width="6.5" height="6" fill="#cfcfcf" stroke="none"/>
<circle cx="62.5" cy="612" r="4.2" fill="#606060" stroke="#6e6e6e" stroke-width="1"/>
<rect x="37" y="632.5" width="16" height="11" fill="#6e6e6e" stroke="#cfcfcf" stroke-width="1.3"/>
<rect x="29" y="638.5" width="15.5" height="11" fill="#6e6e6e" stroke="#cfcfcf" stroke-width="1.3"/>
<g fill="#cfcfcf" stroke="none"><circle cx="35" cy="677.2" r="1.9"/><circle cx="41" cy="677.2" r="1.9"/><circle cx="47" cy="677.2" r="1.9"/></g>
<g stroke="#e0e0e0" stroke-width="0.9" fill="none"><path d="M11.8 83 L9 85.5 L11.8 88 M15.8 83 L13 85.5 L15.8 88"/></g>
<g stroke="#333" stroke-width="0.9"><path d="M30.5 96 V100.5 M32.5 96 V100.5 M34.5 96 V100.5 M36.5 96 V100.5 M38.5 96 V100.5 M40.5 96 V100.5 M42.5 96 V100.5 M44.5 96 V100.5 M46.5 96 V100.5 M48.5 96 V100.5 M50.5 96 V100.5"/></g>
</g>
<g id="panelicons" fill="none" stroke="#d0d0d0" stroke-width="1.4">
<!-- tab close -->
<path d="M93.5 91 L100.3 97.8 M100.3 91 L93.5 97.8" stroke="#e6e6e6" stroke-width="1.3"/>
<!-- dock header chevrons -->
<path d="M1748.8 83 L1746 85.5 L1748.8 88 M1752.8 83 L1750 85.5 L1752.8 88" stroke="#e0e0e0" stroke-width="0.9"/>
<path d="M2032.2 83 L2035 85.5 L2032.2 88 M2036.2 83 L2039 85.5 L2036.2 88" stroke="#e0e0e0" stroke-width="0.9"/>
<path d="M2029 104.5 H2040 M2029 108.3 H2040 M2029 112 H2040" stroke="#d8d8d8" stroke-width="1.3"/>
<!-- canvas scroll chevrons -->
<path d="M1701 124 L1705.3 120 L1709.6 124" stroke="#9a9a9a" stroke-width="1.2"/>
<path d="M1701 1249 L1705.3 1253 L1709.6 1249" stroke="#c8c8c8" stroke-width="1.3"/>
<path d="M1684.5 1266.5 L1687.5 1270 L1684.5 1273.5" stroke="#aaa" stroke-width="1.2"/>
<path d="M671 1266.5 L668 1270 L671 1273.5" stroke="#aaa" stroke-width="1.2"/>
<path d="M646 1265.5 L652 1270 L646 1274.5 Z" fill="#d0d0d0" stroke="none"/>
<!-- status bar -->
<use href="#chv" x="155.5" y="1271" stroke="#e0e0e0"/>
<use href="#chv" x="238.5" y="1271" stroke="#e0e0e0"/>
<use href="#chv" x="352.5" y="1271" stroke="#e0e0e0"/>
<g fill="#6a6a6a" stroke="none"><rect x="259" y="1265.5" width="1.5" height="9"/><path d="M268 1265.5 V1274.5 L261.5 1270 Z M288 1265.5 V1274.5 L281.5 1270 Z M373 1265.5 V1274.5 L379.5 1270 Z M393 1265.5 V1274.5 L399.5 1270 Z"/><rect x="400" y="1265.5" width="1.5" height="9"/></g>
<!-- dock grips -->
<g stroke="#333" stroke-width="0.9"><path d="M1727.5 96 V100.5 M1729.5 96 V100.5 M1731.5 96 V100.5 M1733.5 96 V100.5 M1735.5 96 V100.5 M1737.5 96 V100.5 M1739.5 96 V100.5 M1741.5 96 V100.5 M1743.5 96 V100.5 M1745.5 96 V100.5 M1747.5 96 V100.5
M1727.5 174.5 V179 M1729.5 174.5 V179 M1731.5 174.5 V179 M1733.5 174.5 V179 M1735.5 174.5 V179 M1737.5 174.5 V179 M1739.5 174.5 V179 M1741.5 174.5 V179 M1743.5 174.5 V179 M1745.5 174.5 V179 M1747.5 174.5 V179
M1727.5 285 V289.5 M1729.5 285 V289.5 M1731.5 285 V289.5 M1733.5 285 V289.5 M1735.5 285 V289.5 M1737.5 285 V289.5 M1739.5 285 V289.5 M1741.5 285 V289.5 M1743.5 285 V289.5 M1745.5 285 V289.5 M1747.5 285 V289.5
M1727.5 395 V399.5 M1729.5 395 V399.5 M1731.5 395 V399.5 M1733.5 395 V399.5 M1735.5 395 V399.5 M1737.5 395 V399.5 M1739.5 395 V399.5 M1741.5 395 V399.5 M1743.5 395 V399.5 M1745.5 395 V399.5 M1747.5 395 V399.5
M1727.5 473.5 V478 M1729.5 473.5 V478 M1731.5 473.5 V478 M1733.5 473.5 V478 M1735.5 473.5 V478 M1737.5 473.5 V478 M1739.5 473.5 V478 M1741.5 473.5 V478 M1743.5 473.5 V478 M1745.5 473.5 V478 M1747.5 473.5 V478
M1567.5 714 V719 M1569.5 714 V719 M1571.5 714 V719 M1573.5 714 V719 M1575.5 714 V719 M1577.5 714 V719 M1579.5 714 V719 M1581.5 714 V719 M1583.5 714 V719 M1585.5 714 V719 M1587.5 714 V719"/></g>
<!-- dock icons -->
<path d="M1740 110.5 C1747 110.5 1751 114 1750.5 118.5 C1750 123 1745 127 1737 127 C1730 127 1727.5 123.5 1728.5 120 C1729.3 117.5 1732 117 1733 115.5 C1734 113 1735.5 110.5 1740 110.5 Z" fill="#d0d0d0" stroke="none"/>
<g fill="#535353" stroke="none"><circle cx="1732.8" cy="121.3" r="1.8"/><circle cx="1737.3" cy="123.3" r="1.8"/><circle cx="1742" cy="122.6" r="1.7"/><circle cx="1746" cy="119.8" r="1.6"/><circle cx="1746.5" cy="115.5" r="1.4"/></g>
<defs><radialGradient id="rg1" cx="0" cy="0" r="1.2"><stop offset="0" stop-color="#111"/><stop offset="1" stop-color="#f0f0f0"/></radialGradient></defs>
<path d="M1731 142.5 C1740.5 143 1748 150 1748.3 159.5 H1731 Z" fill="url(#rg1)" stroke="#d8d8d8" stroke-width="1.2"/>
<rect x="1730.5" y="191" width="17.5" height="11" stroke-width="1.2"/>
<g fill="#9a9a9a" stroke="none"><rect x="1732" y="192.5" width="4" height="3.5"/><rect x="1737.5" y="192.5" width="4" height="3.5" fill="#d0d0d0"/><rect x="1743" y="192.5" width="4" height="3.5"/><rect x="1732" y="197" width="4" height="3.5"/><rect x="1737.5" y="197" width="4" height="3.5"/><rect x="1743" y="197" width="4" height="3.5"/></g>
<path d="M1733.5 227 H1744.5 V239.5 H1733.5 Z" fill="#d0d0d0" stroke="none"/>
<path d="M1738 226 L1737 219 M1740 226 L1740.5 218 M1742 226 L1744 220" stroke-width="1.3"/>
<path d="M1735 219 C1733 220 1734 223 1737 222 Z M1740 216 C1739 217 1739.5 219 1741 218.5 Z M1743 219.5 C1745 217 1748 219 1747.5 221 Z" fill="#d0d0d0" stroke-width="1"/>
<g fill="#d0d0d0" stroke="none"><circle cx="1739" cy="255" r="4.4"/><circle cx="1734" cy="261.3" r="4.4"/><circle cx="1744" cy="261.3" r="4.4"/><path d="M1737.8 261 H1740.2 L1742 268 H1736 Z"/><rect x="1733.5" y="267.8" width="11" height="1.3"/></g>
<path d="M1729.5 301 H1749 M1729.5 306.3 H1749 M1729.5 312 H1749" stroke-width="1.2"/>
<path d="M1729.5 306.3 H1749" stroke-width="2"/><path d="M1729.5 312 H1749" stroke-width="2.8"/>
<rect x="1730" y="332.5" width="19" height="13.5" fill="url(#gr1)" stroke="#d8d8d8" stroke-width="1.3"/>
<circle cx="1735.5" cy="368.8" r="6.8" fill="#c8c8c8" stroke="none"/>
<circle cx="1741.5" cy="374.7" r="6.8" fill="#6f6f6f" stroke="#d0d0d0" stroke-width="1.2"/>
<circle cx="1739" cy="417" r="6.3" fill="#d0d0d0" stroke="none"/>
<circle cx="1739" cy="417" r="9" stroke-width="1.3" stroke-dasharray="2 1.6"/>
<rect x="1735" y="442.5" width="14" height="13" stroke-width="1.3"/>
<rect x="1730" y="449" width="7" height="7" fill="#535353" stroke-width="1.2"/>
<rect x="1733.5" y="452.5" width="5.5" height="5.5" fill="#535353" stroke-width="1.1"/>
<path d="M1739 487.5 L1748.5 493.5 L1739 499.5 L1729.5 493.5 Z" fill="#d0d0d0" stroke="none"/>
<path d="M1732.5 498.5 L1739 502.5 L1745.5 498.5 L1748.5 500.5 L1739 506.5 L1729.5 500.5 Z" fill="#d0d0d0" stroke="none"/>
<path d="M1738 521.5 H1731 V537.5 H1747.5 V530" stroke-width="1.6"/>
<path d="M1740.5 528 L1749 519.5 M1743.5 519 H1749.5 V525" stroke-width="1.6"/>
<rect x="1729.5" y="550.5" width="10.5" height="15" stroke-width="1.3"/>
<rect x="1734" y="558.5" width="15" height="11.5" fill="#535353" stroke-width="1.3"/>
<!-- properties icons -->
<path d="M1875 319.5 H1893.5 V324 H1880 V337.5 H1875 Z" fill="#d0d0d0" stroke="none"/>
<g fill="#535353" stroke="none"><rect x="1883" y="321" width="1.5" height="1.5"/><rect x="1886" y="321" width="1.5" height="1.5"/><rect x="1889" y="321" width="1.5" height="1.5"/><rect x="1876.8" y="326" width="1.5" height="1.5"/><rect x="1876.8" y="329.5" width="1.5" height="1.5"/><rect x="1876.8" y="333" width="1.5" height="1.5"/></g>
<path d="M1909.5 319.5 H1927.5 V337.5 H1909.5 Z M1915.5 319.5 V337.5 M1921.5 319.5 V337.5 M1909.5 325.5 H1927.5 M1909.5 331.5 H1927.5" stroke-width="1.5"/>
<rect x="1943.5" y="319.5" width="18.3" height="18.2" fill="#8a8a8a" stroke-width="1.5"/>
<g fill="#4a4a4a" stroke="none"><rect x="1945" y="321" width="3" height="3"/><rect x="1951" y="321" width="3" height="3"/><rect x="1957" y="321" width="3" height="3"/><rect x="1948" y="324" width="3" height="3"/><rect x="1954" y="324" width="3" height="3"/><rect x="1945" y="327" width="3" height="3"/><rect x="1951" y="327" width="3" height="3"/><rect x="1957" y="327" width="3" height="3"/><rect x="1948" y="330" width="3" height="3"/><rect x="1954" y="330" width="3" height="3"/><rect x="1945" y="333" width="3" height="3"/><rect x="1951" y="333" width="3" height="3"/><rect x="1957" y="333" width="3" height="3"/></g>
<path d="M1879.1 362.7 V381 M1882.7 362.7 V381 M1875 368.8 H1894 M1875 376.7 H1894" stroke="#f2f2f2" stroke-width="1.3"/>
<path d="M1913 362.7 V381 M1916.5 362.7 V381 M1909 368.8 H1928 M1909 376.7 H1921" stroke="#c0c0c0" stroke-width="1.2"/>
<rect x="1921" y="375.5" width="8" height="6.5" fill="#c8c8c8" stroke="none"/>
<path d="M1922.5 375.5 V373 C1922.5 370 1927.5 370 1927.5 372.5" stroke="#c8c8c8" stroke-width="1.2"/>
<path d="M1947.5 362.5 V381 M1944 368.8 H1962 M1951 365.5 L1947.8 368.8 L1951 372" stroke="#f2f2f2" stroke-width="1.3"/>
<path d="M1958.5 372 L1954 377.5 H1957 L1955 382 L1961 375.5 H1957.5 L1960 372 Z" fill="#f2f2f2" stroke="none"/>
<path d="M1877.8 406.5 V423.5" stroke="#f2f2f2" stroke-width="1.3"/><circle cx="1877.8" cy="414" r="1.8" fill="#2f2f2f" stroke="#f2f2f2" stroke-width="1.1"/>
<path d="M1883 410 H1888.5 A4.2 4.2 0 0 1 1888.5 418.5 H1883" stroke="#f2f2f2" stroke-width="2.2"/>
<path d="M1909.5 405.5 V423.5 M1914 405.5 V423.5 M1909.5 408.5 H1914 M1909.5 411.5 H1914 M1909.5 414.5 H1914 M1909.5 417.5 H1914 M1909.5 420.5 H1914" stroke="#c8c8c8" stroke-width="1.1"/>
<path d="M1917 410 H1921.5 A4.2 4.2 0 0 1 1921.5 418.5 H1917" stroke="#c8c8c8" stroke-width="2"/>
<g fill="#c8c8c8" stroke="none"><rect x="1944.5" y="406" width="4.2" height="4"/><rect x="1944.5" y="412" width="4.2" height="4"/><rect x="1944.5" y="418" width="4.2" height="4.2"/></g>
<path d="M1951 410 H1955.5 A4.2 4.2 0 0 1 1955.5 418.5 H1951" stroke="#c8c8c8" stroke-width="2"/>
<use href="#chv" x="1979" y="212.5" stroke="#e8e8e8"/>
<use href="#chv" x="1933.5" y="245.5" stroke="#e8e8e8"/>
<path d="M1965.5 241.5 V249.5 L1960 245.5 Z M1983.5 241.5 V249.5 L1989 245.5 Z" fill="#6e6e6e" stroke="none"/>
<!-- layers panel icons -->
<path d="M1669 482 L1672.5 485.8 L1669 489.5 M1675 482 L1678.5 485.8 L1675 489.5" stroke="#d8d8d8" stroke-width="1.2"/>
<path d="M1688 480.5 V491" stroke="#bbb" stroke-width="1.2"/>
<path d="M1697 481.5 H1708 M1697 485.5 H1708 M1697 489.5 H1708" stroke="#d8d8d8" stroke-width="1.3"/>
<circle cx="1466.9" cy="525.1" r="4.3" stroke="#d0d0d0" stroke-width="1.3"/><path d="M1470 528.3 L1474 532.3" stroke="#d0d0d0" stroke-width="1.6"/>
<path d="M1687.5 519 H1702.5 L1696.5 526 V534.5 L1693.5 532 V526 Z" fill="#d0d0d0" stroke="none"/>
<path d="M1453 561.4 C1457 555.5 1462 555.5 1466 561.4 C1462 567.3 1457 567.3 1453 561.4 Z" stroke="#e4e4e4" stroke-width="1.3"/>
<circle cx="1459.5" cy="561.4" r="2.2" fill="#e4e4e4" stroke="none"/>
<path d="M1511.5 558.3 L1515 562 L1511.5 565.7" stroke="#e8e8e8" stroke-width="1.3"/>
<circle cx="1679.7" cy="562.5" r="4.3" stroke="#e0e0e0" stroke-width="1.2"/>
<path d="M1701 550.8 H1708.3 V558 Z" fill="#e8e8e8" stroke="none"/>
<path d="M1527 696 H1523 V707 H1535 V703 M1529 701 L1535.5 694.5 M1531 694 H1536 V699" stroke="#d8d8d8" stroke-width="1.3"/>
<circle cx="1557.5" cy="698.5" r="4.5" stroke="#7a7a7a" stroke-width="1.3"/><path d="M1560.8 701.8 L1565 706" stroke="#7a7a7a" stroke-width="1.6"/>
<rect x="1582.5" y="695" width="9" height="9" stroke="#757575" stroke-width="1.1"/><rect x="1584.5" y="697" width="7" height="6" fill="#757575" stroke="none"/>
<path d="M1610 694.5 V700 H1614 M1612.5 698 L1614.5 700 L1612.5 702" stroke="#d8d8d8" stroke-width="1.2"/>
<rect x="1616" y="696" width="10.5" height="10.5" stroke="#d8d8d8" stroke-width="1.3"/><path d="M1621.3 698.5 V704 M1618.5 701.3 H1624" stroke="#d8d8d8" stroke-width="1.3"/>
<rect x="1642.5" y="694.5" width="12.5" height="12" stroke="#d8d8d8" stroke-width="1.4"/><path d="M1648.8 697.5 V703.5 M1645.8 700.5 H1651.8" stroke="#d8d8d8" stroke-width="1.3"/>
<path d="M1672 697 H1683 M1675 697 V695 H1680 V697 M1673 697 V706.5 H1682 V697 M1676 699 V704.5 M1679 699 V704.5" stroke="#757575" stroke-width="1.1"/>
</g>
</svg>
</body></html>
